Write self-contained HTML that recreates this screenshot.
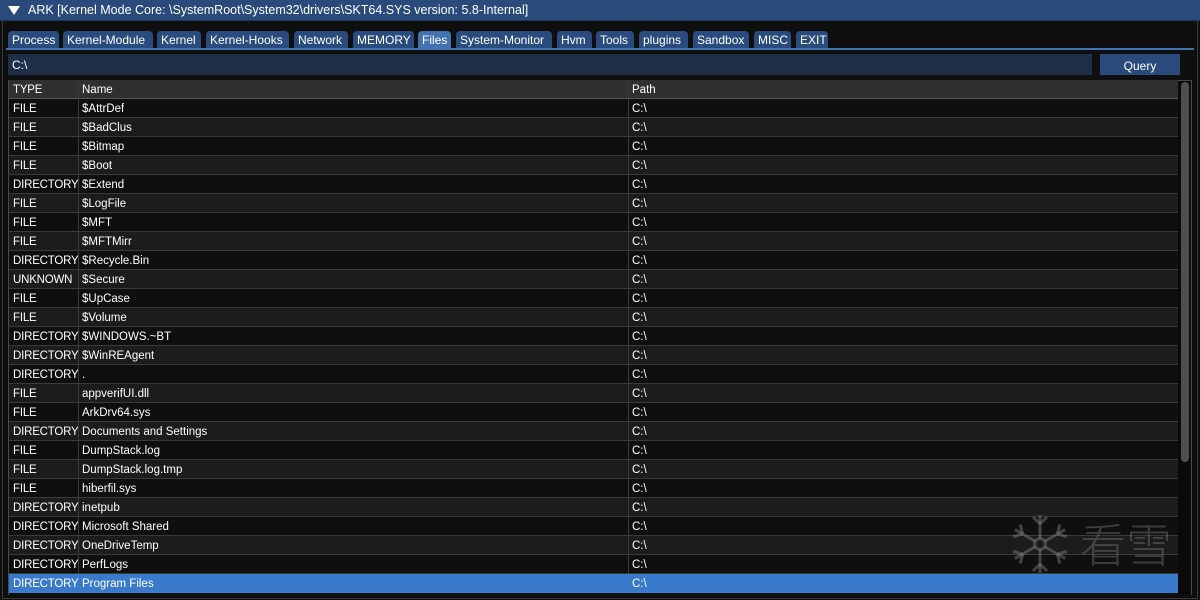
<!DOCTYPE html>
<html><head><meta charset="utf-8"><style>
*{margin:0;padding:0;box-sizing:border-box}
body{width:1200px;height:600px;background:#0f0f0f;position:relative;overflow:hidden;font-family:"Liberation Sans","Noto Sans CJK SC",sans-serif;font-size:12px;color:#fff}
.a{position:absolute}
.title{left:0;top:0;width:1200px;height:21px;background:#294a7a;border-bottom:1px solid #1f3658}
.title span{position:absolute;left:28px;top:3px;font-size:12.5px}
.tri{left:8px;top:6px;width:0;height:0;border-left:6px solid transparent;border-right:6px solid transparent;border-top:9px solid #fff}
.tab{position:absolute;top:31px;height:18px;background:#2a4b7d;border-radius:4px 4px 0 0;padding:2px 0 0 4px;font-size:12px;white-space:nowrap}
.tab.on{background:#4272b2}
.uline{left:6px;top:48px;width:1188px;height:2px;background:#4272b2}
.inp{left:8px;top:54px;width:1084px;height:21px;background:#1f2f4a;padding:4px 0 0 4px}
.btn{left:1100px;top:54px;width:80px;height:21px;background:#294a7a;text-align:center;padding-top:5px}
.tbl{left:8px;top:80px;width:1184px;height:515px;border:1px solid #4a4a4a;border-bottom:none}
.row{position:absolute;left:9px;width:1169px;height:19px;border-bottom:1px solid #3a3a3a;font-size:11.5px}
.row span{position:absolute;top:4px;overflow:hidden;white-space:nowrap}
.c1{left:4px;width:66px;letter-spacing:-0.2px}.c2{left:73px}.c3{left:623px}
.hd{background:#303030;border-bottom:1px solid #555}
.ev{background:#0f0f0f}.od{background:#1c1c1c}
.sel{background:#3a7acc;border-bottom:none}
.vl{position:absolute;top:80px;width:1px;height:494px;background:#3a3a3a}
.sb{left:1178px;top:81px;width:12px;height:513px;background:#0a0a0a}
.th{left:1181px;top:82px;width:8px;height:380px;background:#4f4f4f;border-radius:4px}
.wm{left:1080px;top:514px;font-size:46px;color:rgba(130,130,130,.4);font-family:"Noto Sans CJK SC",sans-serif;font-weight:300;line-height:58px}
.frame{left:2px;top:21px;width:1196px;height:578px;border:1px solid #3a3a3a;border-top:none}
</style></head><body>
<div class="a frame"></div>
<div class="a title"><div class="a tri"></div><span>ARK [Kernel Mode Core: \SystemRoot\System32\drivers\SKT64.SYS version: 5.8-Internal]</span></div>
<div class="tab" style="left:8px;width:51px">Process</div>
<div class="tab" style="left:63px;width:90px">Kernel-Module</div>
<div class="tab" style="left:157px;width:44px">Kernel</div>
<div class="tab" style="left:206px;width:83px">Kernel-Hooks</div>
<div class="tab" style="left:294px;width:54px">Network</div>
<div class="tab" style="left:353px;width:61px">MEMORY</div>
<div class="tab on" style="left:418px;width:33px">Files</div>
<div class="tab" style="left:456px;width:96px">System-Monitor</div>
<div class="tab" style="left:557px;width:35px">Hvm</div>
<div class="tab" style="left:596px;width:38px">Tools</div>
<div class="tab" style="left:639px;width:49px">plugins</div>
<div class="tab" style="left:693px;width:56px">Sandbox</div>
<div class="tab" style="left:754px;width:37px">MISC</div>
<div class="tab" style="left:796px;width:32px">EXIT</div>
<div class="a uline"></div>
<div class="a inp">C:\</div>
<div class="a btn">Query</div>
<div class="a tbl"></div>
<div class="row hd" style="top:80px"><span class="c1">TYPE</span><span class="c2">Name</span><span class="c3">Path</span></div>
<div class="row ev" style="top:99px"><span class="c1">FILE</span><span class="c2">$AttrDef</span><span class="c3">C:\</span></div>
<div class="row od" style="top:118px"><span class="c1">FILE</span><span class="c2">$BadClus</span><span class="c3">C:\</span></div>
<div class="row ev" style="top:137px"><span class="c1">FILE</span><span class="c2">$Bitmap</span><span class="c3">C:\</span></div>
<div class="row od" style="top:156px"><span class="c1">FILE</span><span class="c2">$Boot</span><span class="c3">C:\</span></div>
<div class="row ev" style="top:175px"><span class="c1">DIRECTORY</span><span class="c2">$Extend</span><span class="c3">C:\</span></div>
<div class="row od" style="top:194px"><span class="c1">FILE</span><span class="c2">$LogFile</span><span class="c3">C:\</span></div>
<div class="row ev" style="top:213px"><span class="c1">FILE</span><span class="c2">$MFT</span><span class="c3">C:\</span></div>
<div class="row od" style="top:232px"><span class="c1">FILE</span><span class="c2">$MFTMirr</span><span class="c3">C:\</span></div>
<div class="row ev" style="top:251px"><span class="c1">DIRECTORY</span><span class="c2">$Recycle.Bin</span><span class="c3">C:\</span></div>
<div class="row od" style="top:270px"><span class="c1">UNKNOWN</span><span class="c2">$Secure</span><span class="c3">C:\</span></div>
<div class="row ev" style="top:289px"><span class="c1">FILE</span><span class="c2">$UpCase</span><span class="c3">C:\</span></div>
<div class="row od" style="top:308px"><span class="c1">FILE</span><span class="c2">$Volume</span><span class="c3">C:\</span></div>
<div class="row ev" style="top:327px"><span class="c1">DIRECTORY</span><span class="c2">$WINDOWS.~BT</span><span class="c3">C:\</span></div>
<div class="row od" style="top:346px"><span class="c1">DIRECTORY</span><span class="c2">$WinREAgent</span><span class="c3">C:\</span></div>
<div class="row ev" style="top:365px"><span class="c1">DIRECTORY</span><span class="c2">.</span><span class="c3">C:\</span></div>
<div class="row od" style="top:384px"><span class="c1">FILE</span><span class="c2">appverifUI.dll</span><span class="c3">C:\</span></div>
<div class="row ev" style="top:403px"><span class="c1">FILE</span><span class="c2">ArkDrv64.sys</span><span class="c3">C:\</span></div>
<div class="row od" style="top:422px"><span class="c1">DIRECTORY</span><span class="c2">Documents and Settings</span><span class="c3">C:\</span></div>
<div class="row ev" style="top:441px"><span class="c1">FILE</span><span class="c2">DumpStack.log</span><span class="c3">C:\</span></div>
<div class="row od" style="top:460px"><span class="c1">FILE</span><span class="c2">DumpStack.log.tmp</span><span class="c3">C:\</span></div>
<div class="row ev" style="top:479px"><span class="c1">FILE</span><span class="c2">hiberfil.sys</span><span class="c3">C:\</span></div>
<div class="row od" style="top:498px"><span class="c1">DIRECTORY</span><span class="c2">inetpub</span><span class="c3">C:\</span></div>
<div class="row ev" style="top:517px"><span class="c1">DIRECTORY</span><span class="c2">Microsoft Shared</span><span class="c3">C:\</span></div>
<div class="row od" style="top:536px"><span class="c1">DIRECTORY</span><span class="c2">OneDriveTemp</span><span class="c3">C:\</span></div>
<div class="row ev" style="top:555px"><span class="c1">DIRECTORY</span><span class="c2">PerfLogs</span><span class="c3">C:\</span></div>
<div class="row sel" style="top:574px"><span class="c1">DIRECTORY</span><span class="c2">Program Files</span><span class="c3">C:\</span></div>
<div class="vl" style="left:78px"></div>
<div class="vl" style="left:628px"></div>
<div class="a sb"></div><div class="a th"></div>
<svg class="a" style="left:1008px;top:512px" width="64" height="64" viewBox="-32 -32 64 64" stroke="rgba(130,130,130,.45)" stroke-width="3" fill="none">
<g id="b"><line x1="0" y1="-6" x2="0" y2="-29"/><line x1="0" y1="-20" x2="-7" y2="-27"/><line x1="0" y1="-20" x2="7" y2="-27"/></g>
<use href="#b" transform="rotate(60)"/><use href="#b" transform="rotate(120)"/><use href="#b" transform="rotate(180)"/><use href="#b" transform="rotate(240)"/><use href="#b" transform="rotate(300)"/>
<polygon points="0,-6 5.2,-3 5.2,3 0,6 -5.2,3 -5.2,-3"/>
</svg>
<div class="a wm">看雪</div>
</body></html>
